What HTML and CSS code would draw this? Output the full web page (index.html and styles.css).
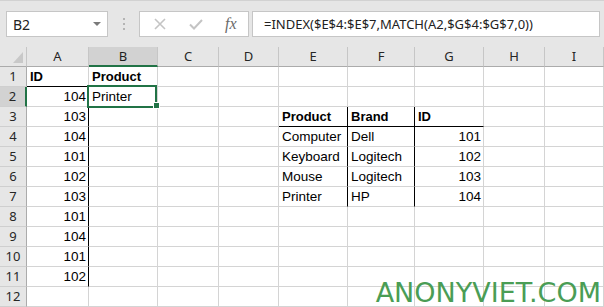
FILE: index.html
```html
<!DOCTYPE html>
<html lang="en">
<head>
<meta charset="UTF-8">
<title>INDEX MATCH</title>
<link rel="stylesheet" href="styles.css">
</head>
<body>

<div class="app">

  <div class="toolbar">
    <div class="namebox">
      <span>B2</span>
      <span class="drop"></span>
    </div>
    <div class="grip"><i></i><i></i><i></i></div>
    <div class="fxbox">
      <svg class="ico" width="12" height="12" viewBox="0 0 12 12"><path d="M1 1 L11 11 M11 1 L1 11" stroke="#c4c4c4" stroke-width="1.6" fill="none"/></svg>
      <svg class="ico" width="14" height="11" viewBox="0 0 14 11"><path d="M1 5.5 L5 9.5 L13 1" stroke="#c4c4c4" stroke-width="2" fill="none"/></svg>
      <span class="fx">fx</span>
    </div>
    <div class="formula">=INDEX($E$4:$E$7,MATCH(A2,$G$4:$G$7,0))</div>
  </div>

  <div class="sheet">
    <!-- headers -->
    <div class="corner"><svg width="10" height="11" viewBox="0 0 10 11"><polygon points="10,0 10,11 0,11" fill="#c8c8c8"/></svg></div>
    <div class="ch">A</div><div class="ch sel">B</div><div class="ch">C</div><div class="ch">D</div><div class="ch">E</div><div class="ch">F</div><div class="ch">G</div><div class="ch">H</div><div class="ch">I</div>

    <!-- 1 -->
    <div class="rh">1</div>
    <div class="c b line-b">ID</div><div class="c b">Product</div><div class="c"></div><div class="c"></div><div class="c"></div><div class="c"></div><div class="c"></div><div class="c"></div><div class="c"></div>
    <!-- 2 -->
    <div class="rh sel">2</div>
    <div class="c n line-r">104</div><div class="c active">Printer<span class="handle"></span></div><div class="c"></div><div class="c"></div><div class="c"></div><div class="c"></div><div class="c"></div><div class="c"></div><div class="c"></div>
    <!-- 3 -->
    <div class="rh">3</div>
    <div class="c n line-r">103</div><div class="c"></div><div class="c"></div><div class="c"></div><div class="c b line-r line-b">Product</div><div class="c b line-r line-b">Brand</div><div class="c b line-b">ID</div><div class="c"></div><div class="c"></div>
    <!-- 4 -->
    <div class="rh">4</div>
    <div class="c n line-r">104</div><div class="c"></div><div class="c"></div><div class="c"></div><div class="c line-r">Computer</div><div class="c line-r">Dell</div><div class="c n">101</div><div class="c"></div><div class="c"></div>
    <!-- 5 -->
    <div class="rh">5</div>
    <div class="c n line-r">101</div><div class="c"></div><div class="c"></div><div class="c"></div><div class="c line-r">Keyboard</div><div class="c line-r">Logitech</div><div class="c n">102</div><div class="c"></div><div class="c"></div>
    <!-- 6 -->
    <div class="rh">6</div>
    <div class="c n line-r">102</div><div class="c"></div><div class="c"></div><div class="c"></div><div class="c line-r">Mouse</div><div class="c line-r">Logitech</div><div class="c n">103</div><div class="c"></div><div class="c"></div>
    <!-- 7 -->
    <div class="rh">7</div>
    <div class="c n line-r">103</div><div class="c"></div><div class="c"></div><div class="c"></div><div class="c line-r">Printer</div><div class="c line-r">HP</div><div class="c n">104</div><div class="c"></div><div class="c"></div>
    <!-- 8 -->
    <div class="rh">8</div>
    <div class="c n line-r">101</div><div class="c"></div><div class="c"></div><div class="c"></div><div class="c"></div><div class="c"></div><div class="c"></div><div class="c"></div><div class="c"></div>
    <!-- 9 -->
    <div class="rh">9</div>
    <div class="c n line-r">104</div><div class="c"></div><div class="c"></div><div class="c"></div><div class="c"></div><div class="c"></div><div class="c"></div><div class="c"></div><div class="c"></div>
    <!-- 10 -->
    <div class="rh">10</div>
    <div class="c n line-r">101</div><div class="c"></div><div class="c"></div><div class="c"></div><div class="c"></div><div class="c"></div><div class="c"></div><div class="c"></div><div class="c"></div>
    <!-- 11 -->
    <div class="rh">11</div>
    <div class="c n line-r">102</div><div class="c"></div><div class="c"></div><div class="c"></div><div class="c"></div><div class="c"></div><div class="c"></div><div class="c"></div><div class="c"></div>
    <!-- 12 -->
    <div class="rh">12</div>
    <div class="c"></div><div class="c"></div><div class="c"></div><div class="c"></div><div class="c"></div><div class="c"></div><div class="c"></div><div class="c"></div><div class="c"></div>
  </div>

  <div class="watermark">ANONYVIET.COM</div>
</div>

</body>
</html>
```

FILE: styles.css
```css
body {
  margin: 0;
  background-color: #fff;
}
.app {
  position: relative;
  width: 604px;
  height: 307px;
  overflow: hidden;
  font-family: "Liberation Sans", Arial, sans-serif;
}

/* formula bar */
.toolbar {
  height: 47px;
  box-sizing: border-box;
  background-color: #e6e6e6;
  border-top: 1px solid #d2d2d2;
  padding-top: 10px;
  display: flex;
  align-items: flex-start;
}
.namebox {
  margin-left: 6px;
  width: 102px;
  height: 26px;
  box-sizing: border-box;
  background-color: #fff;
  border: 1px solid #c6c6c6;
  display: flex;
  align-items: center;
  justify-content: space-between;
  padding: 0 6px 0 6px;
  font-family: "Noto Sans", sans-serif;
  font-size: 14px;
  color: #222;
}
.drop {
  width: 0;
  height: 0;
  border-left: 4px solid transparent;
  border-right: 4px solid transparent;
  border-top: 4px solid #7a7a7a;
}
.grip {
  width: 31px;
  height: 26px;
  display: flex;
  flex-direction: column;
  align-items: center;
  justify-content: center;
  gap: 3px;
}
.grip i {
  display: block;
  width: 2px;
  height: 2px;
  background-color: #b4b4b4;
}
.fxbox {
  width: 110px;
  height: 26px;
  box-sizing: border-box;
  background-color: #fff;
  border: 1px solid #c6c6c6;
  display: flex;
  align-items: center;
  padding-left: 14px;
  gap: 23px;
}
.fx {
  font-family: "Liberation Serif", serif;
  font-style: italic;
  font-size: 16px;
  color: #6a6a6a;
  margin-left: -1px;
}
.formula {
  margin-left: 3px;
  width: 348px;
  height: 26px;
  box-sizing: border-box;
  background-color: #fff;
  border: 1px solid #c6c6c6;
  padding-left: 11px;
  line-height: 24px;
  font-family: "Noto Sans", sans-serif;
  font-size: 13px;
  color: #222;
  white-space: nowrap;
}

/* grid */
.sheet {
  display: grid;
  grid-template-columns: 27px 62px 69px 61px 60px 69px 67px 69px 61px 59px;
  grid-template-rows: 20px repeat(12, 20px);
}
.sheet > div {
  box-sizing: border-box;
  border-right: 1px solid #d4d4d4;
  border-bottom: 1px solid #d4d4d4;
  white-space: nowrap;
  overflow: hidden;
}
.corner {
  background-color: #e6e6e6;
  border-right-color: #c6c6c6 !important;
  border-bottom-color: #ababab !important;
  display: flex;
  align-items: flex-end;
  justify-content: flex-end;
  padding: 0 3px 3px 0;
}
.corner svg {
  display: block;
}
.ch, .rh {
  background-color: #e6e6e6;
  font-family: "Noto Sans", sans-serif;
  font-size: 13px;
  color: #262626;
  text-align: center;
  line-height: 19px;
}
.ch {
  border-right-color: #c6c6c6 !important;
  border-bottom-color: #ababab !important;
}
.rh {
  border-right-color: #ababab !important;
  border-bottom-color: #cfcfcf !important;
}
.ch.sel {
  background-color: #d2d2d2;
  border-bottom: 2px solid #217346 !important;
  color: #1e1e1e;
}
.rh.sel {
  background-color: #d2d2d2;
  border-right: 2px solid #217346 !important;
}
.c {
  font-size: 13.5px;
  line-height: 19px;
  color: #000;
  padding: 0 3px;
}
.c.b {
  font-weight: bold;
  font-size: 13px;
}
.c.n {
  text-align: right;
  padding-right: 2px;
}
.line-r {
  border-right-color: #000 !important;
}
.line-b {
  border-bottom-color: #000 !important;
}
.active {
  position: relative;
  overflow: visible !important;
}
.active::after {
  content: "";
  position: absolute;
  left: -2px;
  top: -2px;
  width: 70px;
  height: 23px;
  box-sizing: border-box;
  border: 2px solid #217346;
}
.handle {
  position: absolute;
  left: 64px;
  top: 15px;
  width: 5px;
  height: 5px;
  background-color: #217346;
  border: 1px solid #fff;
  z-index: 2;
}

.watermark {
  position: absolute;
  right: 3px;
  bottom: 0;
  font-family: "DejaVu Sans", sans-serif;
  font-size: 27px;
  color: #4a9d55;
  line-height: 28px;
}
```
